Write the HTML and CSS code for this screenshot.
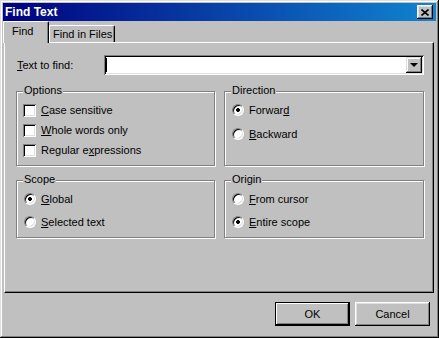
FILE: index.html
```html
<!DOCTYPE html>
<html lang="en">
<head>
  <meta charset="UTF-8">
  <title>Find Text</title>
  <link rel="stylesheet" href="styles.css">
</head>
<body>
  <div class="window">
    <div class="titlebar">
      <span class="title">Find Text</span>
      <span class="close">
        <svg width="8" height="7" viewBox="0 0 8 7"><path d="M0.5 0.5 L7.5 6.5 M7.5 0.5 L0.5 6.5" stroke="#000" stroke-width="1.6"/></svg>
      </span>
    </div>

    <div class="tabs">
      <div class="tab active">Find</div>
      <div class="tab">Find in Files</div>
    </div>

    <div class="panel">
      <div class="find-row">
        <label class="find-label"><u>T</u>ext to find:</label>
        <div class="combo">
          <span class="caret"></span>
          <span class="combo-btn"><span class="arrow"></span></span>
        </div>
      </div>

      <div class="groups">
        <!-- top row -->
        <div class="group group-tall">
          <div class="group-title">Options</div>
          <div class="check-list">
            <div class="item check-item"><span class="checkbox"></span><span><u>C</u>ase sensitive</span></div>
            <div class="item check-item"><span class="checkbox"></span><span><u>W</u>hole words only</span></div>
            <div class="item check-item"><span class="checkbox"></span><span>Regular e<u>x</u>pressions</span></div>
          </div>
        </div>
        <div class="group group-tall">
          <div class="group-title">Direction</div>
          <div class="radio-list">
            <div class="item radio-item"><span class="radio on"></span><span>Forwar<u>d</u></span></div>
            <div class="item radio-item"><span class="radio"></span><span><u>B</u>ackward</span></div>
          </div>
        </div>

        <!-- bottom row -->
        <div class="group group-short">
          <div class="group-title">Scope</div>
          <div class="radio-list">
            <div class="item radio-item"><span class="radio on"></span><span><u>G</u>lobal</span></div>
            <div class="item radio-item"><span class="radio"></span><span><u>S</u>elected text</span></div>
          </div>
        </div>
        <div class="group group-short">
          <div class="group-title">Origin</div>
          <div class="radio-list">
            <div class="item radio-item"><span class="radio"></span><span><u>F</u>rom cursor</span></div>
            <div class="item radio-item"><span class="radio on"></span><span><u>E</u>ntire scope</span></div>
          </div>
        </div>
      </div>
    </div>

    <div class="buttons">
      <div class="btn default"><span>OK</span></div>
      <div class="btn"><span>Cancel</span></div>
    </div>
  </div>
</body>
</html>
```

FILE: styles.css
```css
/* classic dialog look */
* {
  box-sizing: border-box;
}

body {
  margin: 0;
  background: #c0c0c0;
  font-family: "Liberation Sans", Arial, sans-serif;
  font-size: 11px;
  color: #000;
}

.window {
  width: 439px;
  height: 338px;
  padding: 3px;
  background: #c0c0c0;
  box-shadow: inset -1px -1px #000, inset 1px 1px #dfdfdf,
              inset -2px -2px #808080, inset 2px 2px #fff;
}

.titlebar {
  height: 18px;
  display: flex;
  align-items: center;
  justify-content: space-between;
  padding: 0 3px 0 2px;
  background: linear-gradient(to right, #000080, #1084d0);
}

.title {
  color: #fff;
  font-weight: bold;
  font-size: 12px;
}

.close {
  width: 16px;
  height: 14px;
  display: flex;
  align-items: center;
  justify-content: center;
  background: #c0c0c0;
  box-shadow: inset -1px -1px #000, inset 1px 1px #fff,
              inset -2px -2px #808080, inset 2px 2px #dfdfdf;
}

.tabs {
  height: 21px;
  display: flex;
  align-items: flex-end;
}

.tab {
  height: 17px;
  padding: 2px 0 0 3px;
  border-top: 1px solid #fff;
  border-left: 1px solid #fff;
  border-right: 1px solid #000;
  border-radius: 2px 2px 0 0;
  box-shadow: inset -1px 0 #808080;
  width: 66px;
}

.tab.active {
  position: relative;
  z-index: 1;
  height: 22px;
  width: 46px;
  margin-bottom: -1px;
  padding: 3px 0 0 8px;
  background: #c0c0c0;
}

.panel {
  height: 251px;
  margin: 0 2px 0 1px;
  padding: 12px 0 0 12px;
  border-top: 1px solid #fff;
  border-left: 1px solid #fff;
  border-right: 1px solid #000;
  border-bottom: 1px solid #000;
  box-shadow: inset -1px -1px #808080;
}

.find-row {
  display: flex;
  align-items: center;
  height: 20px;
}

.find-label {
  width: 87px;
}

.combo {
  width: 320px;
  height: 20px;
  display: flex;
  justify-content: space-between;
  padding: 2px;
  background: #fff;
  box-shadow: inset 1px 1px #808080, inset -1px -1px #fff,
              inset 2px 2px #000, inset -2px -2px #dfdfdf;
}

.caret {
  width: 1px;
  height: 14px;
  margin: 1px 0 0 0;
  background: #000;
}

.combo-btn {
  width: 16px;
  height: 16px;
  display: flex;
  align-items: center;
  justify-content: center;
  background: #c0c0c0;
  box-shadow: inset -1px -1px #000, inset 1px 1px #dfdfdf,
              inset -2px -2px #808080, inset 2px 2px #fff;
}

.arrow {
  width: 0;
  height: 0;
  border-left: 4px solid transparent;
  border-right: 4px solid transparent;
  border-top: 4px solid #000;
}

.groups {
  display: grid;
  grid-template-columns: 199px 200px;
  grid-template-rows: 75px 58px;
  column-gap: 9px;
  row-gap: 14px;
  margin: 16px 0 0 -1px;
}

.group {
  border: 1px solid #808080;
  box-shadow: inset 1px 1px #fff, 1px 1px #fff;
  padding: 0 0 0 6px;
}

.group-title {
  width: fit-content;
  margin: -8px 0 0 0;
  padding: 0 1px;
  line-height: 13px;
  background: #c0c0c0;
}

.check-list {
  margin-top: 3px;
}

.radio-list {
  margin-top: 1px;
}

.item {
  display: flex;
  align-items: center;
}

.check-item {
  height: 20px;
}

.radio-item {
  height: 24px;
  padding-left: 1px;
}

.group-short .radio-item {
  height: 23px;
}

.checkbox {
  width: 13px;
  height: 13px;
  margin-right: 5px;
  background: #fff;
  box-shadow: inset 1px 1px #808080, inset -1px -1px #fff,
              inset 2px 2px #000, inset -2px -2px #dfdfdf;
}

.radio {
  width: 12px;
  height: 12px;
  margin-right: 5px;
  border-radius: 50%;
  border: 1px solid;
  border-color: #808080 #fff #fff #808080;
  background: #fff;
  box-shadow: inset 1px 1px #000, inset -1px -1px #dfdfdf;
}

.radio.on {
  background: radial-gradient(circle, #000 1.6px, #fff 2.2px);
}

.buttons {
  display: flex;
  justify-content: flex-end;
  gap: 5px;
  margin-top: 9px;
  padding-right: 6px;
}

.btn {
  width: 75px;
  height: 24px;
  display: flex;
  align-items: center;
  justify-content: center;
  background: #c0c0c0;
  box-shadow: inset -1px -1px #000, inset 1px 1px #fff,
              inset -2px -2px #808080, inset 2px 2px #dfdfdf;
}

.btn.default {
  border: 1px solid #000;
  box-shadow: inset -1px -1px #000, inset 1px 1px #fff,
              inset -2px -2px #808080;
}
```
